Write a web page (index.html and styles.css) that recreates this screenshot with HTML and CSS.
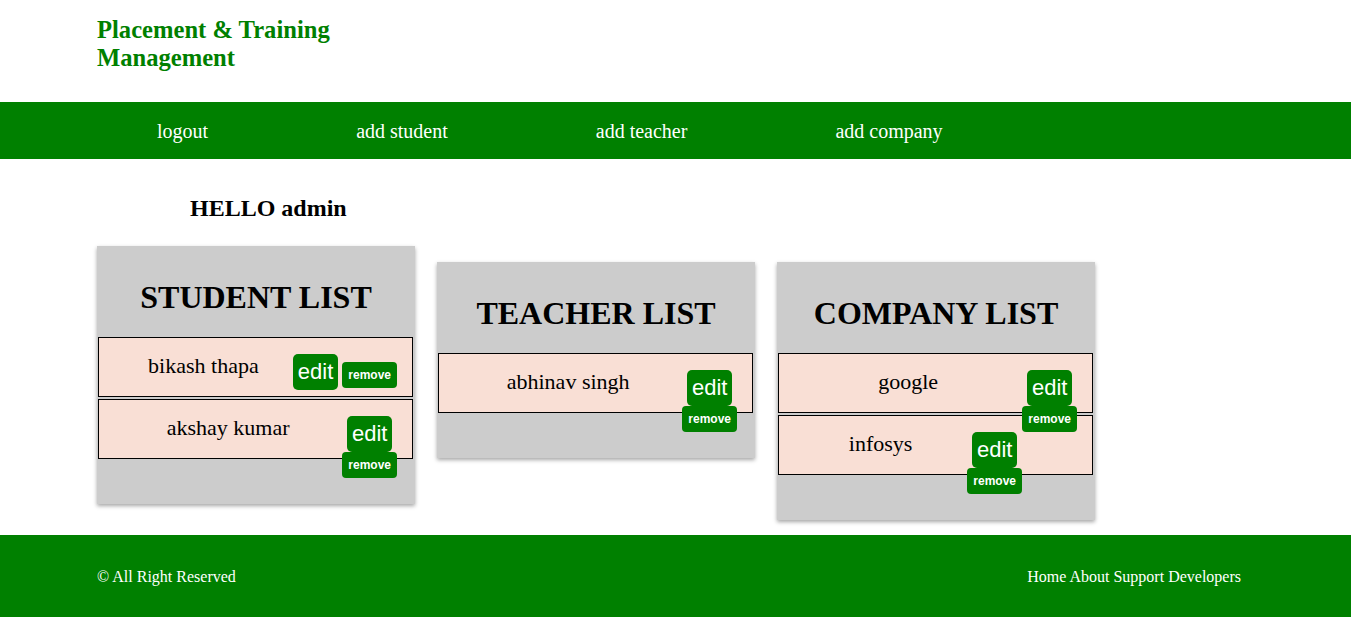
FILE: index.html
```html
<!DOCTYPE html>
<html lang="en">
<head>
<meta charset="utf-8">
<title>Placement &amp; Training Management</title>
<link rel="stylesheet" href="styles.css">
</head>
<body>
<header class="header">
  <h2 class="brand">Placement &amp; Training Management</h2>
</header>
<nav class="nav">
  <a class="nav-link" href="#">logout</a>
  <a class="nav-link" href="#">add student</a>
  <a class="nav-link" href="#">add teacher</a>
  <a class="nav-link" href="#">add company</a>
</nav>
<main class="main">
  <h2 class="hello">HELLO admin</h2>
  <div class="cards">
    <section class="card">
      <h1 class="card-title">STUDENT LIST</h1>
      <div class="row">
        <div class="name">bikash thapa</div>
        <div class="actions"><button class="btn-edit">edit</button> <button class="btn-remove">remove</button></div>
      </div>
      <div class="row">
        <div class="name">akshay kumar</div>
        <div class="actions stack"><button class="btn-edit">edit</button> <button class="btn-remove">remove</button></div>
      </div>
    </section>
    <section class="card card-low">
      <h1 class="card-title">TEACHER LIST</h1>
      <div class="row">
        <div class="name">abhinav singh</div>
        <div class="actions stack"><button class="btn-edit">edit</button> <button class="btn-remove">remove</button></div>
      </div>
    </section>
    <section class="card card-low">
      <h1 class="card-title">COMPANY LIST</h1>
      <div class="row">
        <div class="name">google</div>
        <div class="actions stack"><button class="btn-edit">edit</button> <button class="btn-remove">remove</button></div>
      </div>
      <div class="row">
        <div class="name">infosys</div>
        <div class="actions stack shift"><button class="btn-edit">edit</button> <button class="btn-remove">remove</button></div>
      </div>
    </section>
  </div>
</main>
<footer class="footer">
  <div class="copy">© All Right Reserved</div>
  <div class="links">Home About Support Developers</div>
</footer>
</body>
</html>
```

FILE: styles.css
```css
html, body {
  margin: 0;
  padding: 0;
  background: #fff;
  font-family: "Liberation Serif", "Times New Roman", serif;
  color: #000;
}

.header {
  height: 102px;
  box-sizing: border-box;
  padding: 16px 0 0 97px;
}

.brand {
  margin: 0;
  width: 260px;
  font-size: 24.6px;
  line-height: 28px;
  font-weight: bold;
  color: #008000;
}

.nav {
  height: 57px;
  box-sizing: border-box;
  padding-top: 2px;
  background: #008000;
  display: flex;
  align-items: center;
  gap: 148px;
  padding-left: 157px;
}

.nav-link {
  color: #fff;
  text-decoration: none;
  font-size: 20px;
}

.main {
  padding-bottom: 15px;
}

.hello {
  margin: 36px 0 0 0;
  padding-left: 190px;
  font-size: 24px;
  font-weight: bold;
}

.cards {
  margin-top: 24px;
  display: flex;
  align-items: flex-start;
  gap: 22px;
  padding-left: 97px;
}

.card {
  width: 318px;
  box-sizing: border-box;
  background: #ccc;
  padding: 12px 1px 43px 1px;
  box-shadow: 0 2px 4px rgba(0, 0, 0, 0.35);
}

.card-low {
  margin-top: 16px;
}

.card-title {
  margin: 21px 0;
  font-size: 32px;
  font-weight: bold;
  text-align: center;
}

.row {
  width: 315px;
  height: 60px;
  box-sizing: border-box;
  border: 1px solid #000;
  background: #f9dfd5;
  margin-bottom: 2px;
  display: flex;
  align-items: flex-start;
  padding: 0 15px;
}

.name {
  flex: 1;
  text-align: center;
  font-size: 22px;
  padding-top: 15px;
}

.actions {
  padding-top: 16px;
  font-size: 16px;
  text-align: center;
}

.actions.stack {
  width: min-content;
}

.actions.shift {
  margin-right: 55px;
}

.btn-edit,
.btn-remove {
  background: #008000;
  color: #fff;
  border: none;
  font-family: "Liberation Sans", Arial, sans-serif;
  line-height: normal;
  margin: 0;
  cursor: pointer;
}

.btn-edit {
  font-size: 22px;
  padding: 5px;
  border-radius: 5px;
}

.btn-remove {
  font-size: 12px;
  font-weight: bold;
  padding: 6px;
  border-radius: 4px;
}

.footer {
  height: 82px;
  box-sizing: border-box;
  padding: 2px 110px 0 97px;
  background: #008000;
  color: #fff;
  display: flex;
  align-items: center;
  justify-content: space-between;
  font-size: 16px;
}
```
